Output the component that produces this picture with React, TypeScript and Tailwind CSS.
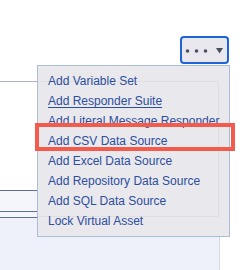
import React from "react";

const items = [
  "Add Variable Set",
  "Add Responder Suite",
  "Add Literal Message Responder",
  "Add CSV Data Source",
  "Add Excel Data Source",
  "Add Repository Data Source",
  "Add SQL Data Source",
  "Lock Virtual Asset",
];

export default function App() {
  return (
    <div
      className="relative w-[240px] h-[270px] overflow-hidden bg-white"
      style={{ fontFamily: '"Liberation Sans", Arial, sans-serif' }}
    >
      {/* toolbar */}
      <div className="flex justify-end pt-[36px] pr-[11px] h-[81px]">
        <button className="relative w-[49px] h-[28px] rounded-[4px] border-2 border-[#1e64d6] bg-[#e9e8ee] p-0">
          <svg
            className="absolute left-[-2px] top-[-2px]"
            width="49"
            height="28"
            viewBox="0 0 49 28"
          >
            <circle cx="7.5" cy="15" r="1.8" fill="#4a505c" />
            <circle cx="16.5" cy="15" r="1.8" fill="#4a505c" />
            <circle cx="25.5" cy="15" r="1.8" fill="#4a505c" />
            <polygon points="36,12 43,12 39.5,17.5" fill="#4a505c" />
          </svg>
        </button>
      </div>

      {/* underlying panel */}
      <div className="w-[220px] h-[189px] border-t border-r border-t-[#a7b1c2] border-r-[#d6dae2] flex flex-col">
        <div className="h-[108px] bg-white" />
        <div className="h-[21px] border-t border-[#5f6e9b] bg-[#f4f6fb]" />
        <div className="h-[6px] border-t border-[#5f6e9b] bg-[#f4f6fb]" />
        <div className="flex-1 border-t border-[#5f6e9b] bg-[#eef1f9]" />
      </div>

      {/* dropdown menu */}
      <div className="absolute left-[37px] top-[65px] w-[193px] h-[172px] border border-[#a9bdd9] bg-[#e9e8ed]">
        <div className="absolute left-0 top-[15px] w-[181px] h-[136px] border-t border-r border-b border-[#dfdee4]" />
        <div className="relative flex flex-col pt-[5px] pl-[10px]">
          {items.map((t, i) => (
            <div
              key={t}
              className={
                i === 1
                  ? "h-[20px] leading-[20px] text-[12px] text-[#2c4e9c] underline underline-offset-2 whitespace-nowrap"
                  : "h-[20px] leading-[20px] text-[12px] text-[#2c4e9c] whitespace-nowrap"
              }
            >
              {t}
            </div>
          ))}
        </div>
      </div>

      {/* highlight annotation */}
      <div className="absolute left-[35px] top-[123px] w-[200px] h-[28px] border-[4px] border-[#f35b4c]" />
    </div>
  );
}
